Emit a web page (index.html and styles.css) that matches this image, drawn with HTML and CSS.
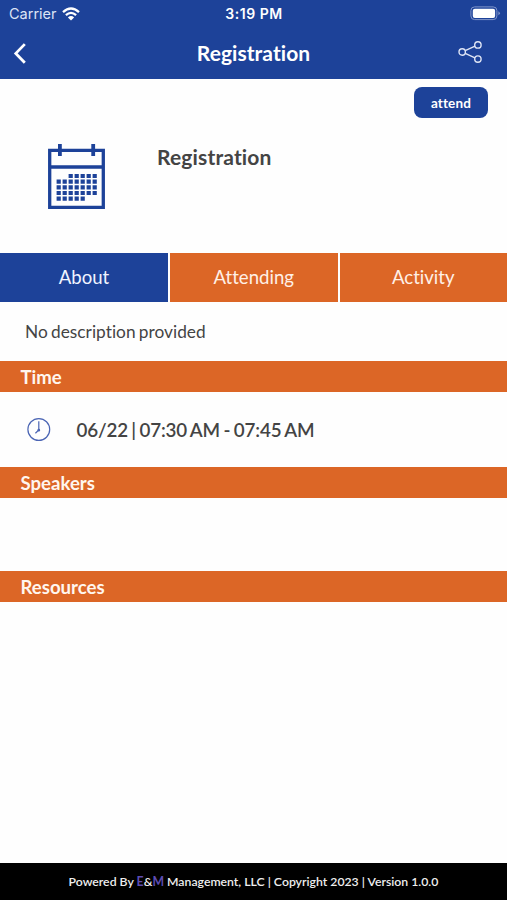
FILE: index.html
```html
<!DOCTYPE html>
<html lang="en">
<head>
<meta charset="utf-8">
<title>Registration</title>
<link rel="stylesheet" href="styles.css">
</head>
<body>
<header class="top">
  <div class="status">
    <div class="carrier"><span class="carrier-name">Carrier</span>
      <svg width="18" height="14" viewBox="0 0 18 14" fill="none" stroke="#fff" stroke-width="2.3"><path d="M1 5.1Q9-2.1 17 5.1M3.9 8.1Q9 3.6 14.1 8.1"/><path d="M5.9 10.4Q9 7.7 12.1 10.4L9 13.6Z" fill="#fff" stroke="none"/></svg>
    </div>
    <span class="clock">3:19 PM</span>
    <svg class="battery" width="31" height="15" viewBox="0 0 31 15"><rect x=".9" y=".9" width="26" height="12.7" rx="3.7" fill="none" stroke="#8296cb"/><rect x="2.8" y="2.7" width="22.3" height="9.2" rx="2" fill="#fff"/><path d="M28.4 5.3q3 2 0 4z" fill="#8296cb"/></svg>
  </div>
  <div class="nav">
    <svg class="back" width="14" height="22" viewBox="0 0 14 22" fill="none" stroke="#fff" stroke-width="2.8"><path d="M12.8 2.1 3.8 11.4l9 9.3"/></svg>
    <h1 class="nav-title">Registration</h1>
    <svg class="share" width="25" height="24" viewBox="0 0 25 24" fill="none" stroke="#dfe5f5" stroke-width="1.4"><circle cx="4.2" cy="12" r="3.2"/><circle cx="19.9" cy="4.9" r="3.2"/><circle cx="19.9" cy="19.1" r="3.2"/><path d="M7.2 10.7 17 6.2M7.2 13.3l9.8 4.5"/></svg>
  </div>
</header>
<section class="summary">
  <svg class="calendar" width="57" height="66" viewBox="0 0 57 66" fill="none" stroke="#1d4299">
    <path d="M1.7 6.4h53.6v57H1.7zM1.7 23h53.6" stroke-width="3.3"/>
    <path d="M11.9 0v12M45.2 0v12" stroke-width="3.8"/>
    <path d="M20.6 32h29M8.6 37.7h41M8.6 43.3h41M8.6 49h41M8.6 54.7h29" stroke-width="4.2" stroke-dasharray="4.2 1.8"/>
  </svg>
  <h2 class="event-title">Registration</h2>
  <button class="attend">attend</button>
</section>
<nav class="tabs">
  <div class="tab active">About</div>
  <div class="tab">Attending</div>
  <div class="tab">Activity</div>
</nav>
<main class="content">
  <p class="description">No description provided</p>
  <h3 class="bar">Time</h3>
  <div class="time">
    <svg width="24" height="24" viewBox="0 0 24 24" fill="none" stroke="#4b65b4" stroke-width="1.2"><circle cx="11.8" cy="11.5" r="10.9"/><path d="M11.8 3.2v8.8L8.4 15.2"/><circle cx="11.8" cy="12.2" r=".8"/></svg>
    <span class="time-text">06/22 | 07:30 AM - 07:45 AM</span>
  </div>
  <h3 class="bar">Speakers</h3>
  <div class="empty"></div>
  <h3 class="bar">Resources</h3>
</main>
<footer class="footer">Powered By <b>E</b>&amp;<b>M</b> Management, LLC | Copyright 2023 | Version 1.0.0</footer>
</body>
</html>
```
FILE: styles.css
```css
* { box-sizing: border-box; }
body {
  margin: 0;
  height: 900px;
  display: flex;
  flex-direction: column;
  background: #fefefe;
  color: #444;
  font-family: Lato, sans-serif;
  font-variant-ligatures: none;
  overflow: hidden;
}
h1, h2, h3, p { margin: 0; }
svg { display: block; flex: none; }
.top { height: 79px; background: #1d4299; color: #fff; }
.status {
  height: 27px;
  padding: 0 6px 0 9px;
  display: grid;
  grid-template-columns: 1fr auto 1fr;
  align-items: center;
  font-family: Inter, sans-serif;
  line-height: 27px;
}
.carrier { display: flex; gap: 5px; align-items: center; }
.carrier-name { color: #dce4f5; font-size: 14.5px; }
.clock { font-weight: 600; font-size: 14px; letter-spacing: .55px; margin-left: -2px; }
.battery { justify-self: end; }
.nav {
  height: 52px;
  padding: 0 24px 0 12px;
  display: grid;
  grid-template-columns: 37px 1fr 25px;
  align-items: center;
}
.share { margin-top: -2px; }
.nav-title { text-align: center; font-size: 21px; line-height: 52px; font-weight: 700; letter-spacing: .05px; }
.summary {
  height: 174px;
  padding: 8px 19px 0 48px;
  display: flex;
  align-items: flex-start;
}
.calendar { margin-top: 57px; }
.event-title { margin: 56px 0 0 52px; font-size: 21px; line-height: 27px; font-weight: 700; letter-spacing: .15px; }
.attend {
  margin-left: auto;
  width: 74px;
  height: 31px;
  padding: 1px 0 0;
  border: 0;
  border-radius: 8px;
  background: #1d4299;
  color: #fff;
  font: 700 13.5px/30px Lato, sans-serif;
  letter-spacing: .15px;
}
.tabs { display: grid; grid-template-columns: 168px 167.5px 167.5px; gap: 2px; height: 48.5px; }
.tab { background: #dc6626; color: #fff0e6; font-size: 18.6px; line-height: 48px; text-align: center; }
.tab.active { background: #1d4299; color: #f0f4ff; }
.content { flex: 1; }
.description { height: 59.5px; padding-left: 25px; font-size: 17.3px; line-height: 60px; word-spacing: -1.2px; letter-spacing: .02px; }
.bar {
  height: 31px;
  padding-left: 20.5px;
  background: #dc6626;
  color: #fff6ef;
  font-size: 18.6px;
  line-height: 33px;
  font-weight: 700;
}
.time { height: 75px; padding-left: 27px; display: flex; align-items: center; gap: 25.5px; }
.time-text { font-size: 18.8px; font-weight: 600; line-height: 75px; letter-spacing: -.17px; word-spacing: -1px; }
.empty { height: 73px; }
.footer {
  height: 37px;
  background: #000;
  color: #eee;
  font-size: 12.25px;
  line-height: 38px;
  font-weight: 600;
  text-align: center;
}
.footer b { color: #5d4cb0; font-weight: 700; }
```
